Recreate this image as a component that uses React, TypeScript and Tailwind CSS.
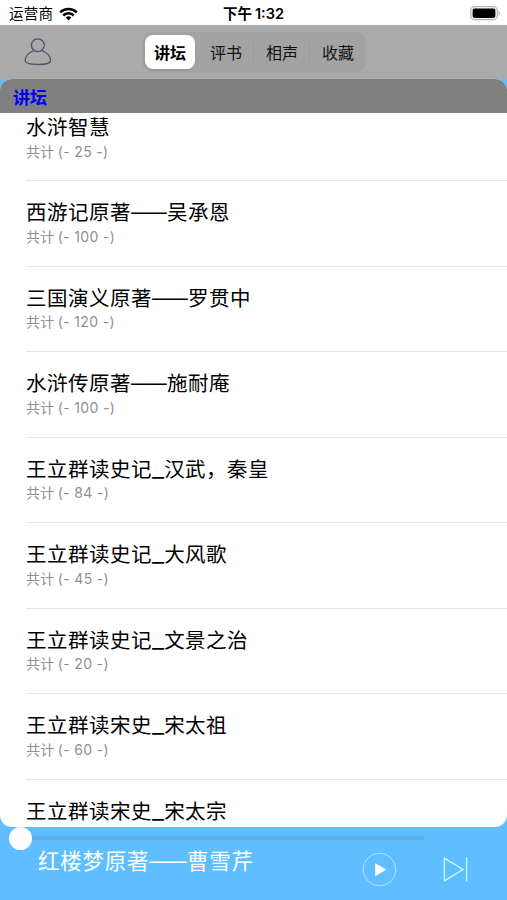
import { useState } from 'react';

interface Book {
  title: string;
  count?: number;
}

const TABS = ['讲坛', '评书', '相声', '收藏'];

const BOOKS: Book[] = [
  { title: '水浒智慧', count: 25 },
  { title: '西游记原著——吴承恩', count: 100 },
  { title: '三国演义原著——罗贯中', count: 120 },
  { title: '水浒传原著——施耐庵', count: 100 },
  { title: '王立群读史记_汉武，秦皇', count: 84 },
  { title: '王立群读史记_大风歌', count: 45 },
  { title: '王立群读史记_文景之治', count: 20 },
  { title: '王立群读宋史_宋太祖', count: 60 },
  { title: '王立群读宋史_宋太宗' },
];

// ---------------- STATUS BAR ----------------
const StatusBar = () => (
  <div className="grid h-[25px] shrink-0 grid-cols-3 items-center bg-white pl-[9px] pr-[6px] pt-[2px] text-black">
    <div className="flex items-center gap-[6px] text-[14.5px] leading-none tracking-[0.3px]">
      <span className="pt-px">运营商</span>
      <svg width="19" height="14" viewBox="0 0 19 14" fill="none" stroke="black" strokeWidth="2.5">
        <path d="M1.2 5.3a11.8 11.8 0 0 1 16.6 0" />
        <path d="M4.2 8.5a7.5 7.5 0 0 1 10.6 0" />
        <path d="M9.5 13.4 6.7 10.6a4 4 0 0 1 5.6 0Z" fill="black" stroke="none" />
      </svg>
    </div>
    <div className="-ml-[3px] pt-px text-center text-[14.5px] font-semibold leading-none">
      下午<span className="ml-[3px]">1:32</span>
    </div>
    <svg className="justify-self-end" width="31" height="15" viewBox="0 0 31 15">
      <rect x="0.7" y="0.7" width="26.6" height="13" rx="4" fill="white" stroke="#b4b4b4" strokeWidth="1.3" />
      <rect x="2.6" y="2.5" width="22.8" height="9.4" rx="2" fill="black" />
      <path d="M28.6 4.8c1.8.6 1.8 4.2 0 4.8Z" fill="#b4b4b4" />
    </svg>
  </div>
);

// Dashes and underscores are set in their own size so they sit well between the characters
const Title = ({ text }: { text: string }) => (
  <>
    {text.split(/(——|_)/).map((part, i) => {
      if (part === '——') {
        return (
          <span key={i} className="relative -top-px mr-[0.8px] text-[0.88em] leading-none tracking-[-0.4px]">
            {part}
          </span>
        );
      }
      if (part === '_') return <span key={i} className="text-[1.32em] font-light leading-[0] tracking-normal">{part}</span>;
      return <span key={i}>{part}</span>;
    })}
  </>
);

export default function App() {
  const [active, setActive] = useState(0);

  return (
    <div
      lang="zh-CN"
      className="flex h-[900px] w-[507px] flex-col overflow-hidden bg-[#5ebeff] font-['Inter','Noto_Sans_CJK_SC',sans-serif]"
    >
      <StatusBar />

      {/* Nav bar */}
      <div className="flex h-[54px] shrink-0 items-center bg-[#aaaaaa]">
        <div className="w-[142px] pl-[24px]">
          <svg width="28" height="28" viewBox="0 0 28 28" fill="none" stroke="#51516b" strokeWidth="1.3">
            <circle cx="13.8" cy="7.3" r="6.4" />
            <path d="M9.7 12.6C4.6 14.6 1.2 18.7 1.2 22.6c0 2.9 4.2 3.9 12.6 3.9s12.8-1 12.8-3.9c0-3.9-3.4-8-8.6-10" />
          </svg>
        </div>
        <div className="grid h-10 w-[224px] grid-cols-4 rounded-[10px] bg-[#a3a3a3]">
          {TABS.map((tab, i) => (
            <button
              key={tab}
              onClick={() => setActive(i)}
              className={`relative my-[3px] flex items-center justify-center pt-[2px] text-[16px] leading-none ${
                active === i
                  ? 'ml-[3px] mr-[3px] rounded-[8px] bg-white font-semibold text-black shadow-sm'
                  : 'font-normal text-[#111111]'
              }`}
            >
              {tab}
              {i > active && i < TABS.length - 1 && <span className="absolute right-0 top-[7px] h-5 w-px bg-[#9b9b9b]" />}
            </button>
          ))}
        </div>
      </div>

      {/* List panel */}
      <div className="flex h-[748px] shrink-0 flex-col overflow-hidden rounded-[12px] bg-white">
        <div className="z-10 flex h-[34px] shrink-0 items-center bg-[#808080] pl-[13px] pt-[4px] text-[17px] font-bold leading-none text-[#0000f5]">
          {TABS[active]}
        </div>
        <ul className="-mt-[17px] pl-[26px]">
          {BOOKS.map((book) => (
            <li key={book.title} className="h-[85.45px] border-b border-[#e6e6e6] pt-[18px]">
              <div className="h-[27px] whitespace-nowrap text-[20.5px] leading-[27px] tracking-[0.5px] text-black">
                <Title text={book.title} />
              </div>
              {book.count !== undefined && (
                <div className="flex h-[21px] items-center text-[14px] leading-none tracking-[0.35px] text-[#909090]">
                  共计<span className="ml-[3px]">(- {book.count} -)</span>
                </div>
              )}
            </li>
          ))}
        </ul>
      </div>

      {/* Player */}
      <div className="flex h-[73px] shrink-0 flex-col text-white">
        <div className="flex h-[22px] items-center pl-[9px]">
          <span className="h-[23px] w-[23px] rounded-full bg-white" />
          <span className="h-1 w-[392px] bg-[#62afe6]" />
        </div>
        <div className="flex flex-1 pl-[38px]">
          <div className="h-[24px] w-[324px] whitespace-nowrap text-[21.5px] leading-[24px] tracking-[0.75px]">
            <Title text="红楼梦原著——曹雪芹" />
          </div>
          <svg className="mt-[3px]" width="35" height="35" viewBox="0 0 35 35">
            <circle cx="17.5" cy="17.5" r="16.3" fill="none" stroke="#b5e1ff" strokeWidth="1" />
            <path d="M13.2 11.2 24.4 17.6 13.2 24.2Z" fill="white" />
          </svg>
          <svg className="ml-[45px] mt-[7px]" width="27" height="27" viewBox="0 0 27 27" fill="none" stroke="#c7ffff" strokeWidth="1.3">
            <path d="M2.4 2.2V24.8L21 13.5Z" />
            <path d="M24.6 1.2V25.4" />
          </svg>
        </div>
      </div>
    </div>
  );
}
